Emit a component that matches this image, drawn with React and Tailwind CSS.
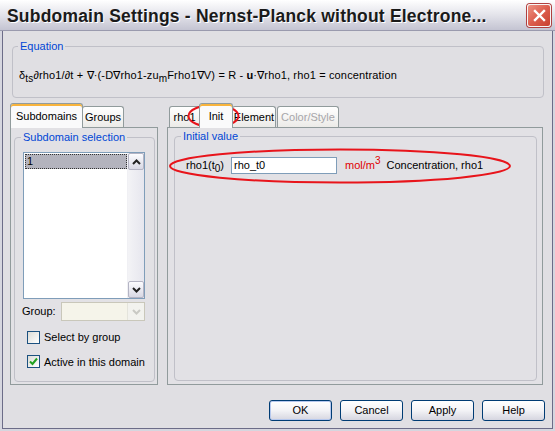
import React from 'react';

const Legend = ({ children, className = '' }) => (
    <legend className={`px-[2px] leading-[13px] text-[#0046d5] ${className}`}>{children}</legend>
);

const Tab = ({ label, selected, disabled, className = '' }) => {
    if (selected) {
        return (
            <div className={`relative z-10 -mb-px h-[25px] flex items-center justify-center bg-[#fafafb] border border-b-0 border-[#919b9c] rounded-t-[3px] shadow-[inset_0_2px_0_#f8b33c] ${className}`}>
                {label}
            </div>
        );
    }
    return (
        <div className={`h-[21px] flex items-center justify-center bg-gradient-to-b from-[#ffffff] to-[#ecebe8] border border-b-0 border-[#919b9c] rounded-t-[3px] ${disabled ? 'text-[#a7a6aa]' : 'text-black'} ${className}`}>
            {label}
        </div>
    );
};

const Checkbox = ({ checked }) => (
    <div className="w-[13px] h-[13px] border border-[#1c5180] bg-gradient-to-br from-[#dcdcd7] to-[#ffffff] flex items-center justify-center">
        {checked && (
            <svg width="9" height="9" viewBox="0 0 9 9">
                <path d="M1 4.5 L3.5 7 L8 1.5" stroke="#21a121" strokeWidth="2" fill="none" />
            </svg>
        )}
    </div>
);

const Chevron = ({ up, color = '#4d6185' }) => (
    <svg width="9" height="6" viewBox="0 0 9 6">
        <path d={up ? 'M1 5 L4.5 1.5 L8 5' : 'M1 1 L4.5 4.5 L8 1'} stroke={color} strokeWidth="2" fill="none" />
    </svg>
);

const Button = ({ label, isDefault }) => (
    <button className={`w-[63px] h-[21px] rounded-[3px] border border-[#003c74] bg-gradient-to-b from-[#ffffff] via-[#f3f3f6] to-[#d6d6e0] text-black ${isDefault ? 'shadow-[inset_0_0_0_1px_#b6c8ee]' : ''}`}>
        {label}
    </button>
);

export default function App() {
    return (
        <div className="relative w-[555px] h-[431px] overflow-hidden flex flex-col bg-[#d6d6df] text-[11px] text-black font-['Liberation_Sans',Arial,sans-serif]">
            {/* title bar */}
            <div className="h-[31px] shrink-0 flex items-center justify-between pl-[7px] pr-[4px] bg-gradient-to-b from-[#ffffff] via-[#e3e3ea] to-[#c4c4d2] border-b border-[#9a9aae]">
                <span className="pt-[2px] text-[17.5px] font-bold text-[#1a1a1a] tracking-[0.2px] whitespace-nowrap [text-shadow:1px_1px_0_#ffffff]">
                    Subdomain Settings - Nernst-Planck without Electrone...
                </span>
                <div className="w-[24px] h-[23px] shrink-0 rounded-[3px] border border-[#f6f6f6] bg-gradient-to-br from-[#ec9385] via-[#dc5e4e] to-[#c8402f] flex items-center justify-center shadow-[0_0_0_1px_#b04040]">
                    <svg width="13" height="13" viewBox="0 0 13 13">
                        <path d="M2 2 L11 11 M11 2 L2 11" stroke="#ffffff" strokeWidth="2.4" strokeLinecap="square" />
                    </svg>
                </div>
            </div>

            {/* frame + client */}
            <div className="flex-1 px-[2px] pb-[2px]">
                <div className="h-full border-x border-b border-[#6c6c88] bg-[#e0dfe3] flex flex-col">
                    <fieldset className="ml-[9px] mr-[8px] mt-[9px] h-[58px] border border-[#c0c0c8] rounded-[4px]">
                        <Legend className="ml-[5px]">Equation</Legend>
                        <div className="mt-[15px] ml-[6px] leading-[14px] whitespace-nowrap tracking-[0.15px]">
                            δ<sub className="text-[10px]">ts</sub>∂rho1/∂t + ∇·(-D∇rho1-zu<sub className="text-[10px]">m</sub>Frho1∇V) = R - <b>u</b>·∇rho1, rho1 = concentration
                        </div>
                    </fieldset>

                    <div className="flex mt-[6px] ml-[7px] gap-[9px]">
                        {/* left column */}
                        <div className="w-[148px] flex flex-col">
                            <div className="h-[23px] flex items-end">
                                <Tab label="Subdomains" selected className="w-[73px]" />
                                <Tab label="Groups" className="w-[42px] -ml-[1px]" />
                            </div>
                            <div className="h-[258px] border border-[#919b9c] bg-[#e2e1e5] pl-[3px] pr-[2px] pt-[3px]">
                                <fieldset className="h-[251px] border border-[#c0c0c8] rounded-[4px]">
                                    <Legend className="ml-[6px]">Subdomain selection</Legend>
                                    <div className="mt-[8px] ml-[8px] w-[122px] h-[147px] border border-[#7f9db9] bg-white flex">
                                        <div className="flex-1 pt-[1px] pl-[1px]">
                                            <div className="h-[15px] bg-[#b3b3bd] border border-dotted border-[#333] leading-[13px] pl-[1px]">1</div>
                                        </div>
                                        <div className="w-[17px] flex flex-col justify-between bg-gradient-to-r from-[#f3f3f6] to-[#e6e6ee] border-l border-[#f0f0f4]">
                                            <div className="h-[17px] rounded-[2px] border border-[#b4b4c4] bg-gradient-to-b from-[#fdfdff] to-[#d8d8e4] flex items-center justify-center">
                                                <Chevron up color="#222" />
                                            </div>
                                            <div className="h-[17px] rounded-[2px] border border-[#b4b4c4] bg-gradient-to-b from-[#fdfdff] to-[#d8d8e4] flex items-center justify-center">
                                                <Chevron color="#222" />
                                            </div>
                                        </div>
                                    </div>
                                    <div className="mt-[3px] ml-[7px] flex items-center">
                                        <span className="w-[39px]">Group:</span>
                                        <div className="w-[84px] h-[19px] border border-[#c9c7ba] bg-[#f5f4ea] flex justify-end">
                                            <div className="w-[17px] h-full bg-[#f2f2ee] border-l border-[#e4e4dc] flex items-center justify-center">
                                                <Chevron color="#c9c9c4" />
                                            </div>
                                        </div>
                                    </div>
                                    <div className="mt-[8px] ml-[12px] flex items-center gap-[4px]">
                                        <Checkbox />
                                        <span>Select by group</span>
                                    </div>
                                    <div className="mt-[8px] ml-[12px] flex items-center gap-[4px]">
                                        <Checkbox checked />
                                        <span>Active in this domain</span>
                                    </div>
                                </fieldset>
                            </div>
                        </div>

                        {/* right column */}
                        <div className="w-[376px] flex flex-col">
                            <div className="h-[23px] flex items-end pl-[2px]">
                                <Tab label="rho1" className="w-[31px]" />
                                <Tab label="Init" selected className="w-[34px] -ml-[1px]" />
                                <Tab label="Element" className="w-[44px] -ml-[1px]" />
                                <Tab label="Color/Style" disabled className="w-[62px] ml-[1px]" />
                            </div>
                            <div className="h-[258px] border border-[#919b9c] bg-[#e2e1e5] pl-[6px] pr-[5px] pt-[2px]">
                                <fieldset className="h-[251px] border border-[#c0c0c8] rounded-[4px]">
                                    <Legend className="ml-[6px]">Initial value</Legend>
                                    <div className="mt-[14px] flex items-center">
                                        <span className="ml-[11px] w-[45px]">rho1(t<sub className="text-[10px]">0</sub>)</span>
                                        <div className="w-[106px] h-[17px] border border-[#7f9db9] bg-white pl-[2px] leading-[15px]">rho_t0</div>
                                        <span className="ml-[8px] text-[#e00000]">mol/m<sup className="text-[10px]">3</sup></span>
                                        <span className="ml-[6px]">Concentration, rho1</span>
                                    </div>
                                </fieldset>
                            </div>
                        </div>
                    </div>

                    <div className="mt-[15px] ml-auto mr-[7px] flex gap-[8px]">
                        <Button label="OK" isDefault />
                        <Button label="Cancel" />
                        <Button label="Apply" />
                        <Button label="Help" />
                    </div>
                </div>
            </div>

            {/* annotation ellipses */}
            <svg className="absolute inset-0 pointer-events-none" width="555" height="431">
                <ellipse cx="213.5" cy="116" rx="25" ry="11" fill="none" stroke="#e8141b" strokeWidth="2" />
                <ellipse cx="340" cy="166" rx="170" ry="16.5" fill="none" stroke="#e8141b" strokeWidth="2" />
            </svg>
        </div>
    );
}
